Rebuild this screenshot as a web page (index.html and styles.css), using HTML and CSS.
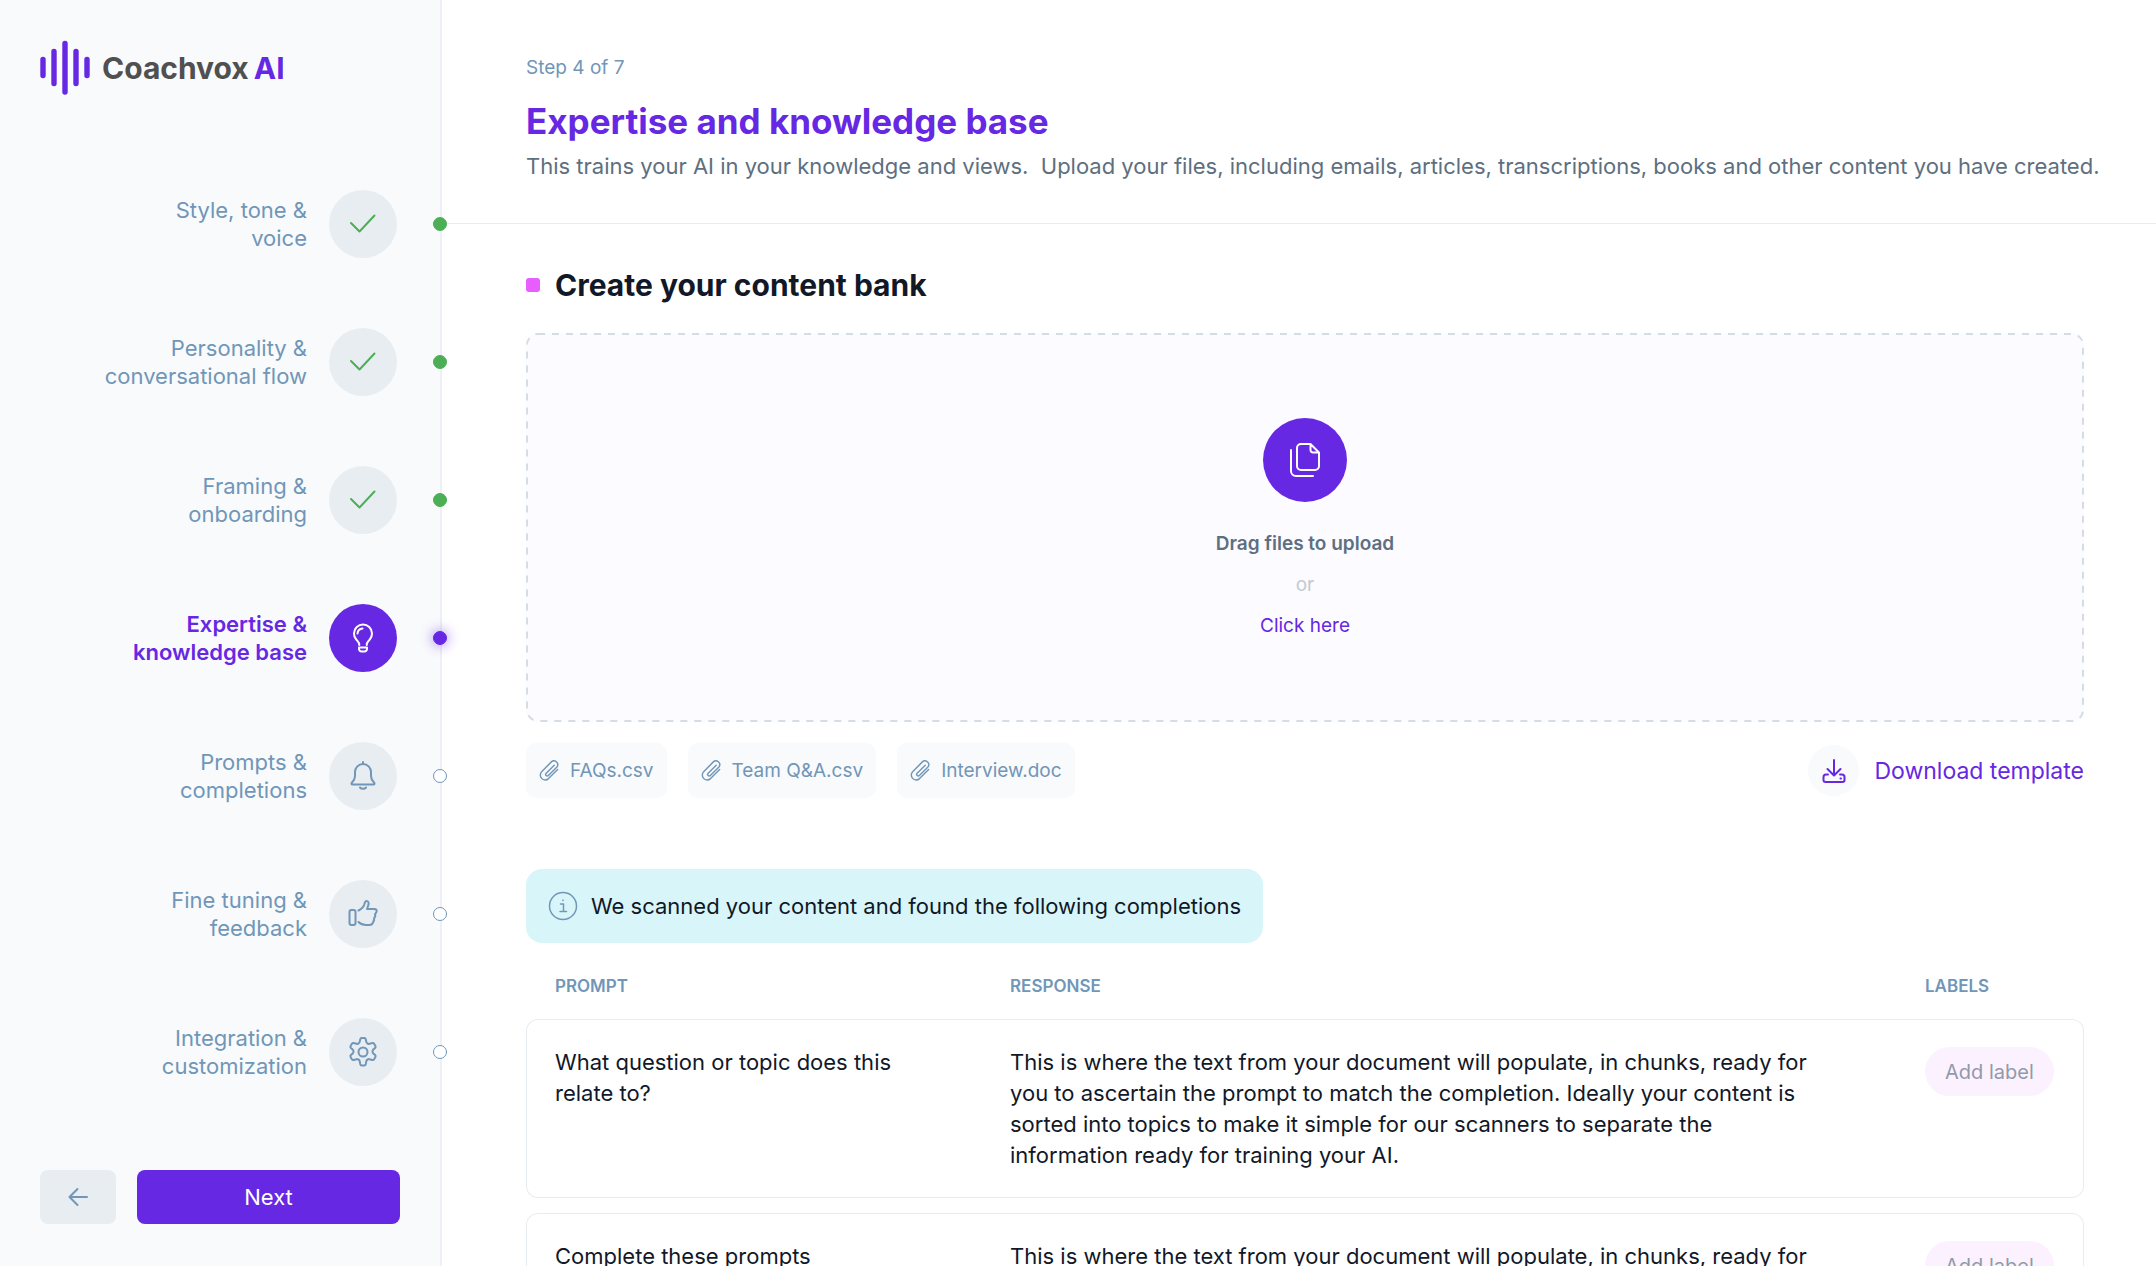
FILE: index.html
```html
<!DOCTYPE html>
<html lang="en">
<head>
    <meta charset="UTF-8">
    <meta name="viewport" content="width=device-width, initial-scale=1.0">
    <title>Coachvox AI - Expertise and knowledge base</title>
    <link rel="stylesheet" href="styles.css">
</head>
<body>
    <div class="layout">
        <aside class="sidebar">
            <a href="#" class="logo">
                <svg class="logo-mark" viewBox="0 0 50 56" aria-hidden="true">
                    <path d="M3 19.500v16M14 11.500v32M25 3.500v48.500M36 11.500v32M47 19.500v16"/>
                </svg>
                <span class="logo-text"><span>Coachvox</span><span class="logo-ai">AI</span></span>
            </a>

            <nav class="steps">
                <a href="#" class="step done">
                    <span class="step-label">Style, tone &amp;<br>voice</span>
                    <span class="step-icon"><svg viewBox="0 0 30 30"><path d="M3 14l8.500 8.500L26.500 6.500"/></svg></span>
                    <span class="step-dot"></span>
                </a>
                <a href="#" class="step done">
                    <span class="step-label">Personality &amp;<br>conversational flow</span>
                    <span class="step-icon"><svg viewBox="0 0 30 30"><path d="M3 14l8.500 8.500L26.500 6.500"/></svg></span>
                    <span class="step-dot"></span>
                </a>
                <a href="#" class="step done">
                    <span class="step-label">Framing &amp;<br>onboarding</span>
                    <span class="step-icon"><svg viewBox="0 0 30 30"><path d="M3 14l8.500 8.500L26.500 6.500"/></svg></span>
                    <span class="step-dot"></span>
                </a>
                <a href="#" class="step active" aria-current="step">
                    <span class="step-label">Expertise &amp;<br>knowledge base</span>
                    <span class="step-icon">
                        <svg viewBox="0 0 30 30">
                            <path d="M11.250 22v-.5c0-2-1.500-3-3-5a9 9 0 1 1 13.500 0c-1.500 2-3 3-3 5v.5M9.500 10.500a5.500 5.500 0 0 1 5-5M11 24.500h8v1.500a2.500 2.500 0 0 1-2.500 2.500h-3a2.500 2.500 0 0 1-2.500-2.500z"/>
                        </svg>
                    </span>
                    <span class="step-dot"></span>
                </a>
                <a href="#" class="step">
                    <span class="step-label">Prompts &amp;<br>completions</span>
                    <span class="step-icon">
                        <svg viewBox="0 0 30 30">
                            <path d="M15 1v2M15 3a8 8 0 0 0-8 8v4c0 3-1 4.500-3 6.500-1 1.200-.5 2 .5 2h21c1 0 1.500-.8.5-2-2-2-3-3.500-3-6.500v-4a8 8 0 0 0-8-8zM12 26.500a3.500 2.500 0 0 0 6 0"/>
                        </svg>
                    </span>
                    <span class="step-dot"></span>
                </a>
                <a href="#" class="step">
                    <span class="step-label">Fine tuning &amp;<br>feedback</span>
                    <span class="step-icon">
                        <svg viewBox="0 0 30 30">
                            <rect x="1.500" y="11" width="6" height="15" rx="2"/>
                            <path d="M10.500 11.500c3-1.500 5-3.500 5.800-6 .5-2 .7-3.500 2.200-3.500 1.800 0 2.500 1.700 2 3.700L19 10h7.500c1.800 0 2.500 1.500 2 2.700L27 15.500l.3 1.500-1.200 2.500v1.500L25 23.500c-.7 2-2 2.500-3.500 2.500H18c-3 0-5.500-1-7.500-3"/>
                        </svg>
                    </span>
                    <span class="step-dot"></span>
                </a>
                <a href="#" class="step">
                    <span class="step-label">Integration &amp;<br>customization</span>
                    <span class="step-icon">
                        <svg viewBox="0 0 30 30">
                            <path d="M12.200 2.500q.3-1.500 1.500-1.500h2.600q1.200 0 1.500 1.500l.5 2.400q.2 1 1.300 1.600t2 .3l2.600-.8q1.200-.4 1.900.7l1.300 2.300q.6 1.100-.3 1.900l-1.800 1.600q-.8.700-.8 2t.8 2l1.800 1.600q.9.800.3 1.900l-1.300 2.300q-.7 1.100-1.900.7l-2.600-.8q-.9-.3-2 .3t-1.300 1.600l-.5 2.900q-.3 1.500-1.500 1.500h-2.600q-1.200 0-1.500-1.500l-.5-2.900q-.2-1-1.300-1.600t-2-.3l-2.600.8q-1.200.4-1.900-.7l-1.300-2.300q-.6-1.100.3-1.900l1.800-1.600q.8-.7.800-2t-.8-2l-1.800-1.600q-.9-.8-.3-1.900l1.300-2.300q.7-1.100 1.900-.7l2.600.8q.9.300 2-.3t1.300-1.600z"/>
                            <circle cx="15" cy="15" r="4.500"/>
                        </svg>
                    </span>
                    <span class="step-dot"></span>
                </a>
            </nav>

            <div class="sidebar-actions">
                <button type="button" class="btn-back" aria-label="Back">
                    <svg viewBox="0 0 20 20"><path d="M19 10H1.500M9.500 2l-8 8 8 8"/></svg>
                </button>
                <button type="button" class="btn-next">Next</button>
            </div>
        </aside>

        <main class="main">
            <header class="page-header">
                <p class="step-count">Step 4 of 7</p>
                <h1>Expertise and knowledge base</h1>
                <p class="intro">This trains your AI in your knowledge and views.&nbsp; Upload your files, including emails, articles, transcriptions, books and other content you have created.</p>
            </header>

            <section class="content">
                <h2>Create your content bank</h2>

                <div class="dropzone">
                    <svg class="dropzone-border" aria-hidden="true"><rect x="1" y="1" rx="11"/></svg>
                    <span class="dropzone-icon">
                        <svg viewBox="0 0 32 36">
                            <path d="M12 2h9.500L30 10.500V24a4 4 0 0 1-4 4H12a4 4 0 0 1-4-4V6a4 4 0 0 1 4-4zM21.500 2v6a2.500 2.500 0 0 0 2.500 2.500h6M2 8v21a5 5 0 0 0 5 5h17"/>
                        </svg>
                    </span>
                    <strong>Drag files to upload</strong>
                    <span class="dropzone-or">or</span>
                    <a href="#">Click here</a>
                </div>

                <div class="files-row">
                    <ul class="files">
                        <li><svg viewBox="0 0 22 22"><use href="#clip"/></svg>FAQs.csv</li>
                        <li><svg viewBox="0 0 22 22"><use href="#clip"/></svg>Team Q&amp;A.csv</li>
                        <li><svg viewBox="0 0 22 22"><use href="#clip"/></svg>Interview.doc</li>
                    </ul>
                    <a href="#" class="download">
                        <span class="download-icon">
                            <svg viewBox="0 0 24 24">
                                <path d="M12 1v15M5.500 10l6.500 6.500 6.500-6.500M6 15.500H4A2.500 2.500 0 0 0 1.500 18v3a2 2 0 0 0 2 2h17a2 2 0 0 0 2-2v-3a2.500 2.500 0 0 0-2.500-2.500h-2M18.500 19.500h.5"/>
                            </svg>
                        </span>
                        Download template
                    </a>
                </div>

                <p class="notice">
                    <svg viewBox="0 0 30 30">
                        <circle cx="15" cy="15" r="13.500"/>
                        <path d="M12.500 13h3v7.500M12 20.500h6.500M15 9v.6"/>
                    </svg>
                    We scanned your content and found the following completions
                </p>

                <table class="completions">
                    <colgroup>
                        <col class="col-prompt">
                        <col>
                        <col class="col-labels">
                    </colgroup>
                    <thead>
                        <tr>
                            <th scope="col">PROMPT</th>
                            <th scope="col">RESPONSE</th>
                            <th scope="col">LABELS</th>
                        </tr>
                    </thead>
                    <tbody>
                        <tr>
                            <td>What question or topic does this<br>relate to?</td>
                            <td>This is where the text from your document will populate, in chunks, ready for<br>you to ascertain the prompt to match the completion. Ideally your content is<br>sorted into topics to make it simple for our scanners to separate the<br>information ready for training your AI.</td>
                            <td><button type="button" class="btn-label">Add label</button></td>
                        </tr>
                        <tr>
                            <td>Complete these prompts</td>
                            <td>This is where the text from your document will populate, in chunks, ready for<br>you to ascertain the prompt to match the completion. Ideally your content is<br>sorted into topics to make it simple for our scanners to separate the<br>information ready for training your AI.</td>
                            <td><button type="button" class="btn-label">Add label</button></td>
                        </tr>
                    </tbody>
                </table>
            </section>
        </main>
    </div>

    <!-- shared icon -->
    <svg class="sprite" aria-hidden="true">
        <symbol id="clip" viewBox="0 0 22 22">
            <path d="M16 5.500l-8.500 8.500a1.600 1.600 0 0 0 2.300 2.300l9-9a4 4 0 0 0-5.600-5.600L3 12a5 5 0 0 0 7 7.500l9.500-9.500"/>
        </symbol>
    </svg>
</body>
</html>
```
FILE: styles.css
```css
* {
    box-sizing: border-box;
}
html, body {
    margin: 0;
    padding: 0;
    height: 100%;
}
body {
    font-family: 'Inter', sans-serif;
    font-size: 22px;
    color: #111827;
    background-color: #ffffff;
}
a {
    text-decoration: none;
    color: #6628e3;
}
h1, h2, p, ul {
    margin: 0;
    padding: 0;
}
button {
    border: none;
    font-family: inherit;
    cursor: pointer;
}
svg {
    fill: none;
    stroke: currentColor;
    stroke-width: 2;
    stroke-linecap: round;
    stroke-linejoin: round;
    flex-shrink: 0;
}
.sprite {
    display: none;
}
.layout {
    display: flex;
    height: 100vh;
    overflow: hidden;
}

/* Sidebar */
.sidebar {
    display: flex;
    flex-direction: column;
    flex: 0 0 442px;
    padding: 40px 0 42px 40px;
    background-color: #f9fafc;
    border-right: 2px solid #edf0f4;
}
.logo {
    display: flex;
    align-items: center;
    gap: 12px;
    height: 56px;
}
.logo-mark {
    width: 50px;
    height: 56px;
    color: #6628e3;
    stroke-width: 5.4;
}
.logo-text {
    display: flex;
    gap: 5px;
    font-size: 30px;
    line-height: 54px;
    font-weight: 700;
    color: #505050;
}
.logo-ai {
    color: #6628e3;
}
.steps {
    display: flex;
    flex-direction: column;
    gap: 70px;
    margin-top: 94px;
}
.step {
    display: flex;
    align-items: center;
    justify-content: flex-end;
    color: #7096b8;
    margin-right: -7px; /* dots sit on the sidebar border */
}
.step-label {
    text-align: right;
    line-height: 28px;
}
.step-icon {
    display: flex;
    align-items: center;
    justify-content: center;
    width: 68px;
    height: 68px;
    margin: 0 36px 0 22px;
    border-radius: 50%;
    background-color: #e8edf2;
}
.step-icon svg {
    width: 30px;
    height: 30px;
}
.step-dot {
    width: 14px;
    height: 14px;
    border: 1px solid #7096b8;
    border-radius: 50%;
    background-color: #ffffff;
    z-index: 1;
}
.step.done svg {
    color: #4caf55;
}
.step.done .step-dot {
    background-color: #4caf55;
    border-color: #4caf55;
}
.step.active {
    color: #6628e3;
    font-weight: 600;
}
.step.active .step-icon {
    background-color: #6628e3;
    color: #ffffff;
}
.step.active .step-dot {
    background-color: #6628e3;
    border-color: #6628e3;
    box-shadow: 0 0 12px 2px rgba(102, 40, 227, 0.4);
}
.sidebar-actions {
    display: flex;
    gap: 21px;
    margin-top: auto;
    padding-right: 40px;
}
.btn-back, .btn-next {
    display: flex;
    align-items: center;
    justify-content: center;
    height: 54px;
    border-radius: 8px;
}
.btn-back {
    width: 76px;
    background-color: #e8edf2;
    color: #7096b8;
}
.btn-back svg {
    width: 20px;
    height: 20px;
}
.btn-next {
    flex: 1;
    background-color: #6628e3;
    color: #ffffff;
    font-size: 22px;
}

/* Main column */
.main {
    flex: 1;
    min-width: 0;
}
.page-header {
    height: 224px;
    padding: 54px 40px 0 84px;
    border-bottom: 1px solid #e8edf2;
}
.step-count {
    font-size: 19px;
    line-height: 28px;
    color: #7096b8;
}
h1 {
    margin-top: 16px;
    font-size: 35px;
    line-height: 46px;
    color: #6628e3;
}
.intro {
    margin-top: 7px;
    line-height: 30px;
    color: #5d6f80;
    white-space: nowrap;
}
.content {
    padding: 40px 72px 0 84px;
}
h2 {
    display: flex;
    align-items: center;
    gap: 15px;
    font-size: 30px;
    line-height: 42px;
}
h2::before {
    content: '';
    width: 14px;
    height: 14px;
    border-radius: 3px;
    background-color: #e85dff;
}
.dropzone {
    position: relative;
    display: flex;
    flex-direction: column;
    align-items: center;
    margin-top: 27px;
    padding: 85px 0 82px;
    border-radius: 12px;
    background-color: #fcfbff;
    font-size: 19px;
    line-height: 28px;
}
.dropzone-border {
    position: absolute;
    inset: 0;
    width: 100%;
    height: 100%;
    color: #d5dde4;
    stroke-dasharray: 7 7;
    stroke-linecap: butt;
    pointer-events: none;
}
.dropzone-border rect {
    width: calc(100% - 2px);
    height: calc(100% - 2px);
}
.dropzone-icon {
    display: flex;
    align-items: center;
    justify-content: center;
    width: 84px;
    height: 84px;
    margin-bottom: 28px;
    border-radius: 50%;
    background-color: #6628e3;
    color: #ffffff;
}
.dropzone-icon svg {
    width: 32px;
    height: 36px;
}
.dropzone strong {
    font-weight: 600;
    color: #5d6f80;
}
.dropzone-or {
    margin: 13px 0;
    color: #c3c9d2;
}
.files-row {
    display: flex;
    align-items: center;
    justify-content: space-between;
    margin-top: 21px;
}
.files {
    display: flex;
    gap: 21px;
    list-style: none;
}
.files li {
    display: flex;
    align-items: center;
    gap: 10px;
    height: 55px;
    padding: 0 13px;
    border-radius: 10px;
    background-color: #f9fafc;
    color: #7096b8;
    font-size: 19px;
}
.files svg {
    width: 21px;
    height: 21px;
    stroke-width: 1.5;
}
.download {
    display: flex;
    align-items: center;
    gap: 15px;
    font-size: 23px;
}
.download-icon {
    display: flex;
    align-items: center;
    justify-content: center;
    width: 51px;
    height: 51px;
    border-radius: 50%;
    background-color: #f9fafc;
}
.download-icon svg {
    width: 24px;
    height: 24px;
}
.notice {
    display: flex;
    align-items: center;
    gap: 13px;
    width: fit-content;
    height: 74px;
    margin-top: 71px;
    padding: 0 22px;
    border-radius: 16px;
    background-color: #d8f6f9;
}
.notice svg {
    width: 30px;
    height: 30px;
    color: #7096b8;
    stroke-width: 1.5;
}

/* Completions table */
.completions {
    width: 100%;
    margin-top: 10px;
    border-collapse: separate;
    border-spacing: 0 15px;
    table-layout: fixed;
}
.col-prompt {
    width: 455px;
}
.col-labels {
    width: 188px;
}
.completions th {
    padding: 0 29px;
    font-size: 17px;
    font-weight: 600;
    line-height: 36px;
    text-align: left;
    color: #7096b8;
}
.completions td {
    padding: 27px 0 26px 29px;
    border: 1px solid #e8edf2;
    border-width: 1px 0;
    line-height: 31px;
    vertical-align: top;
    white-space: nowrap;
}
.completions td:first-child {
    padding-left: 28px;
    border-left-width: 1px;
    border-radius: 12px 0 0 12px;
}
.completions td:last-child {
    border-right-width: 1px;
    border-radius: 0 12px 12px 0;
}
.btn-label {
    height: 49px;
    padding: 0 20px;
    border-radius: 25px;
    background-color: #fcf1ff;
    color: #8f9bab;
    font-size: 20px;
}
```
